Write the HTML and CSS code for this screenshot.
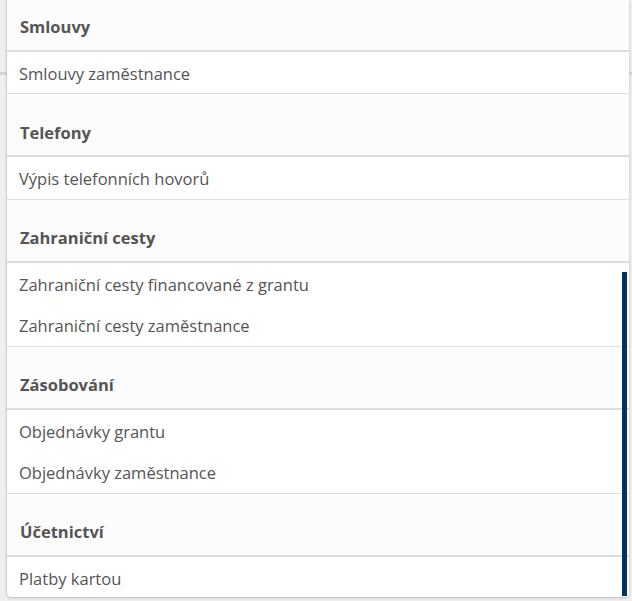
FILE: index.html
```html
<!DOCTYPE html>
<html lang="cs">
<head>
<meta charset="utf-8">
<title>Menu</title>
<link rel="stylesheet" href="styles.css">
</head>
<body>
<div class="menu">
  <div class="list">
    <section class="group">
      <h3 class="group-title">Smlouvy</h3>
      <ul class="items">
        <li class="item">Smlouvy zaměstnance</li>
      </ul>
    </section>
    <section class="group">
      <h3 class="group-title">Telefony</h3>
      <ul class="items">
        <li class="item">Výpis telefonních hovorů</li>
      </ul>
    </section>
    <section class="group">
      <h3 class="group-title">Zahraniční cesty</h3>
      <ul class="items">
        <li class="item">Zahraniční cesty financované z grantu</li>
        <li class="item">Zahraniční cesty zaměstnance</li>
      </ul>
    </section>
    <section class="group">
      <h3 class="group-title">Zásobování</h3>
      <ul class="items">
        <li class="item">Objednávky grantu</li>
        <li class="item">Objednávky zaměstnance</li>
      </ul>
    </section>
    <section class="group group-last">
      <h3 class="group-title">Účetnictví</h3>
      <ul class="items">
        <li class="item">Platby kartou</li>
      </ul>
    </section>
  </div>
  <div class="thumb"></div>
</div>
</body>
</html>
```
FILE: styles.css
```css
html, body {
  margin: 0;
  padding: 0;
}
body {
  width: 632px;
  height: 601px;
  overflow: hidden;
  background: linear-gradient(to bottom, transparent 72px, #d6d6d6 72px, #d6d6d6 75px, transparent 75px), #efefef;
  font-family: "Open Sans", "Noto Sans", sans-serif;
}
.menu {
  position: relative;
  margin: 0 3px 0 7px;
  height: 597px;
  background: #fff;
  border-radius: 0 0 4px 4px;
  overflow: hidden;
  box-shadow: 0 1px 3px rgba(0, 0, 0, 0.22), -1px 0 1px rgba(0, 0, 0, 0.06);
}
.list {
  margin-top: -11.25px;
}
.group {
  border-bottom: 1px solid #e0e0e0;
}
.group-last {
  border-bottom: none;
}
.group-title {
  margin: 0;
  padding: 26.25px 13px 10.75px;
  font-size: 16.5px;
  line-height: 24px;
  font-weight: 700;
  color: #555;
  background: #fcfcfc;
  border-bottom: 2px solid #dcdcdc;
}
.items {
  list-style: none;
  margin: 0;
  padding: 0;
}
.item {
  padding: 11px 12px 8px;
  font-size: 16.5px;
  line-height: 22.5px;
  color: #555;
}
.thumb {
  position: absolute;
  top: 272px;
  right: 2px;
  width: 5px;
  height: 324px;
  background: #003366;
}
```
